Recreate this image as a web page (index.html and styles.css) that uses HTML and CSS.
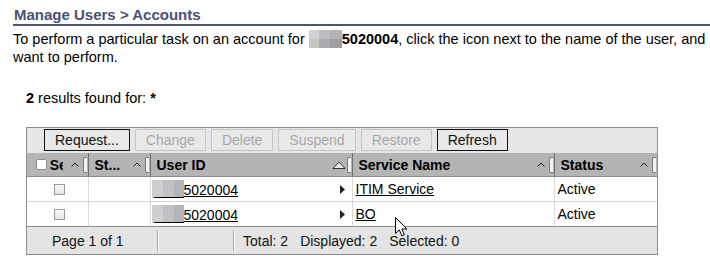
FILE: index.html
```html
<!DOCTYPE html>
<html lang="en">
<head>
    <meta charset="UTF-8">
    <title>Manage Users - Accounts</title>
    <link rel="stylesheet" href="styles.css">
</head>
<body>
    <h1 class="page-title">Manage Users &gt; Accounts</h1>
    <p class="intro">To perform a particular task on an account for <span class="blur-inline"></span><b>5020004</b>, click the icon next to the name of the user, and<br>want to perform.</p>
    <p class="results"><b>2</b> results found for: <b>*</b></p>

    <div class="grid">
        <div class="toolbar">
            <button class="btn">Request...</button>
            <button class="btn" disabled>Change</button>
            <button class="btn" disabled>Delete</button>
            <button class="btn" disabled>Suspend</button>
            <button class="btn" disabled>Restore</button>
            <button class="btn">Refresh</button>
        </div>

        <table class="accounts">
            <colgroup>
                <col style="width:61px">
                <col style="width:62px">
                <col style="width:202px">
                <col style="width:202px">
                <col>
            </colgroup>
            <thead>
                <tr>
                    <th>
                        <div class="th-inner">
                            <span class="head-box"></span>
                            <span class="label label-cut">Select</span>
                            <svg class="caret" width="8" height="5"><polyline points="0.5,4.5 4,1 7.5,4.5" fill="none" stroke="#222"/></svg>
                            <span class="handle"></span>
                        </div>
                    </th>
                    <th>
                        <div class="th-inner">
                            <span class="label">St...</span>
                            <svg class="caret" width="8" height="5"><polyline points="0.5,4.5 4,1 7.5,4.5" fill="none" stroke="#222"/></svg>
                            <span class="handle"></span>
                        </div>
                    </th>
                    <th>
                        <div class="th-inner">
                            <span class="label">User ID</span>
                            <svg class="sorted" width="14" height="8"><polygon points="1,7.5 7,1 13,7.5" fill="#ececec" stroke="#333"/></svg>
                            <span class="handle"></span>
                        </div>
                    </th>
                    <th>
                        <div class="th-inner">
                            <span class="label">Service Name</span>
                            <svg class="caret" width="8" height="5"><polyline points="0.5,4.5 4,1 7.5,4.5" fill="none" stroke="#222"/></svg>
                            <span class="handle"></span>
                        </div>
                    </th>
                    <th>
                        <div class="th-inner">
                            <span class="label">Status</span>
                            <svg class="caret" width="8" height="5"><polyline points="0.5,4.5 4,1 7.5,4.5" fill="none" stroke="#222"/></svg>
                            <span class="handle"></span>
                        </div>
                    </th>
                </tr>
            </thead>
            <tbody>
                <tr>
                    <td class="cb"><span class="row-box"></span></td>
                    <td></td>
                    <td>
                        <div class="uid">
                            <a href="#"><span class="blur-id"></span>5020004</a>
                            <svg width="5" height="9"><polygon points="0,0 5,4.5 0,9" fill="#222"/></svg>
                        </div>
                    </td>
                    <td class="svc"><a href="#">ITIM Service</a></td>
                    <td class="status">Active</td>
                </tr>
                <tr>
                    <td class="cb"><span class="row-box"></span></td>
                    <td></td>
                    <td>
                        <div class="uid">
                            <a href="#"><span class="blur-id"></span>5020004</a>
                            <svg width="5" height="9"><polygon points="0,0 5,4.5 0,9" fill="#222"/></svg>
                        </div>
                    </td>
                    <td class="svc"><a href="#">BO</a></td>
                    <td class="status">Active</td>
                </tr>
            </tbody>
        </table>

        <div class="pager">
            <span class="pg-page">Page 1 of 1</span>
            <span class="pg-sep"></span>
            <span class="pg-blank"></span>
            <span class="pg-sep"></span>
            <span class="pg-info">
                <span>Total: 2</span>
                <span>Displayed: 2</span>
                <span>Selected: 0</span>
            </span>
        </div>
    </div>

    <svg class="cursor" width="14" height="21" viewBox="0 0 14 21">
        <path d="M0.5,0.5 L0.5,16.5 L4.3,12.8 L6.8,18.8 L9.3,17.8 L6.9,12 L12,12 Z" fill="#fff" stroke="#000" stroke-linejoin="round"/>
    </svg>
</body>
</html>
```

FILE: styles.css
```css
body {
    font-family: "Liberation Sans", Arial, sans-serif;
    font-size: 14px;
    margin: 0;
    padding: 0;
    color: #000;
    background-color: #fff;
    position: relative;
    overflow: hidden;
}
.page-title {
    margin: 0 0 0 13px;
    padding: 6px 0 0 1px;
    font-size: 15px;
    line-height: 18px;
    color: #4b5173;
    border-bottom: 2px solid #4f5674;
}
.intro {
    margin: 4px 0 0 13px;
    font-size: 14.5px;
    line-height: 18px;
    white-space: nowrap;
}
.blur-inline {
    display: inline-block;
    width: 33px;
    height: 18px;
    vertical-align: -4px;
    background:
        linear-gradient(to right, #d2d2d6 0 30%, #bdbdc2 30% 65%, #b4b4b8 65%) top / 100% 50% no-repeat,
        linear-gradient(to right, #c9c5c1 0 30%, #a9abae 30% 65%, #9d9fa1 65%) bottom / 100% 50% no-repeat;
}
.results {
    margin: 23px 0 0 26px;
    font-size: 14.5px;
    line-height: 18px;
}
.grid {
    margin: 20px 0 0 26px;
    width: 630px;
    border: 1px solid #8c8c8c;
}
.toolbar {
    display: flex;
    gap: 5px;
    height: 25px;
    padding: 1px 0 0 17px;
    box-sizing: border-box;
    background-color: #e6e6e6;
}
.btn {
    height: 22px;
    padding: 0 10px;
    font-family: "Liberation Sans", Arial, sans-serif;
    font-size: 14px;
    color: #111;
    background-color: #e8e8e8;
    border: 1px solid #111;
    border-radius: 0;
}
.btn:disabled {
    color: #a8a8a8;
    border-color: #c6c6c6;
}
.accounts {
    width: 630px;
    border-collapse: collapse;
    table-layout: fixed;
}
.accounts th {
    height: 23px;
    padding: 0;
    background-color: #b4b4b4;
    border-right: 1px solid #707070;
    border-bottom: 1px solid #8a8a8a;
    text-align: left;
}
.accounts th:last-child {
    border-right: none;
}
.th-inner {
    display: flex;
    align-items: center;
    height: 23px;
    padding-left: 6px;
}
.label {
    flex: 1;
    overflow: hidden;
    white-space: nowrap;
}
.label-cut {
    flex: 0 0 13px;
    margin-right: 8px;
}
.head-box {
    width: 11px;
    height: 11px;
    margin: 0 3px 0 3px;
    background-color: #fff;
    border: 1px solid #8e8e8e;
    border-radius: 2px;
    box-sizing: border-box;
}
.caret {
    margin-right: 4px;
}
.sorted {
    margin-right: 1px;
}
.handle {
    width: 3px;
    height: 14px;
    margin-right: 1px;
    background-color: #f2f2f2;
    border: 1px solid #7c7c7c;
    border-right: none;
    border-radius: 2px 0 0 2px;
}
.accounts td {
    height: 24px;
    padding: 0 3px;
    border-right: 1px solid #dcdcdc;
    border-bottom: 1px solid #d4d4d4;
    white-space: nowrap;
}
.accounts td:last-child {
    border-right: none;
}
.accounts tbody tr:last-child td {
    border-bottom: 1px solid #8c8c8c;
}
.accounts a {
    color: #000;
    text-decoration: underline;
}
.cb {
    text-align: center;
}
.row-box {
    display: inline-block;
    width: 11px;
    height: 11px;
    margin: 3px 0 0 4px;
    box-sizing: border-box;
    border: 1px solid #9a9a9a;
    background: linear-gradient(#fafafa, #e4e4e4);
}
.uid {
    display: flex;
    align-items: center;
    justify-content: space-between;
    margin-left: -2px;
    padding-right: 4px;
}
.blur-id {
    display: inline-block;
    width: 32px;
    height: 18px;
    vertical-align: -3px;
    background:
        linear-gradient(#000, #000) 2px 100% / 30px 1px no-repeat,
        linear-gradient(to right, #d0cecc 0 35%, #c0c1c5 35% 68%, #b4b5b8 68%);
}
.pager {
    display: flex;
    align-items: center;
    height: 27px;
    background-color: #e4e4e4;
    color: #111;
}
.pg-page {
    width: 105px;
    padding-left: 25px;
}
.pg-sep {
    width: 1px;
    height: 21px;
    background-color: #a8a8a8;
    border-right: 1px solid #fafafa;
}
.pg-blank {
    width: 74px;
}
.pg-info {
    display: flex;
    gap: 12px;
    padding-left: 8px;
}
.cursor {
    position: absolute;
    left: 395px;
    top: 217px;
}
```
